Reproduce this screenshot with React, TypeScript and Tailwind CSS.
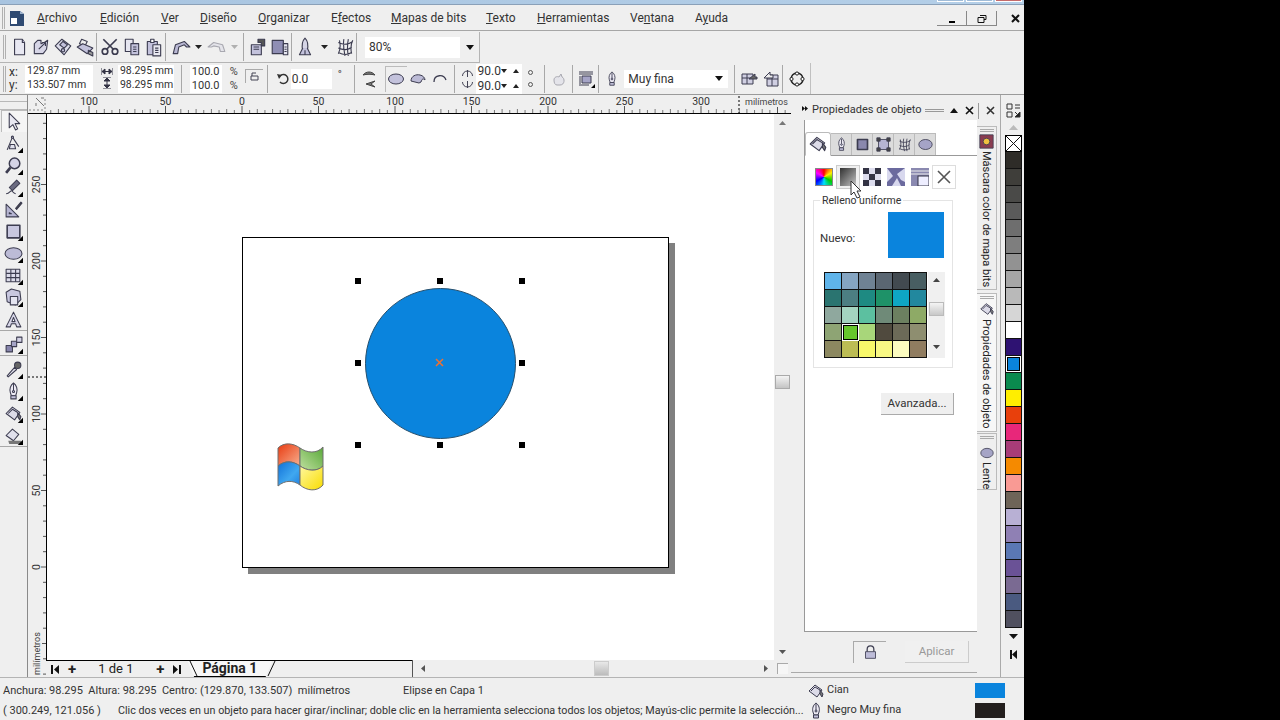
import type { ReactNode } from "react";

const FONT = "font-['Roboto','Noto_Sans',sans-serif]";
const F = "#c3c2dc";
const S = "#3c3c50";

function Ico({ size = 18, tri, dim, children }: { size?: number; tri?: boolean; dim?: boolean; children: ReactNode }) {
  return (
    <svg width={size} height={size} viewBox="0 0 18 18" fill={dim ? "#e4e4ea" : F} stroke={dim ? "#a8a8b0" : S} strokeWidth="1" strokeLinejoin="round">
      {children}
      {tri && <path d="M18 13v5h-5z" fill="#000" stroke="none" />}
    </svg>
  );
}

const icons = {
  newDoc: <><path d="M5 2h7l2 3v11H5z" fill="#e8e8f2" /><path d="M12 2v3h2" /></>,
  open: <><path d="M3 15V6l3-3h3v3l3-1 3-2-1 8-3 4H3z" fill="#d6d5e6" /><path d="M7 11l6-6M10 5h3v3" /></>,
  save: <><path d="M2 8l6-6 8 6-6 8z" fill="#dcdcea" /><path d="M6 7l3-3 4 3-3 3z" /><circle cx="9" cy="12" r="1.5" /></>,
  print: <><path d="M6 2l5 2-2 4-5-2z" fill="#eee" /><path d="M2 9l5-3 9 4-5 5z" /><path d="M12 12l4 2v3l-4-2z" fill="#999" /></>,
  cut: <><circle cx="4.5" cy="13" r="2.5" fill="none" strokeWidth="1.5" /><circle cx="13.5" cy="13" r="2.5" fill="none" strokeWidth="1.5" /><path d="M6 11l9-9M12 11L3 2" strokeWidth="1.5" /></>,
  copy: <><path d="M3 2h7v11H3z" fill="#e6e6f0" /><path d="M8 6h7v10H8z" /><path d="M10 9h3M10 11h3M10 13h3" /></>,
  paste: <><path d="M3 4h9v12H3z" /><path d="M6 2h3v3H6z" fill="#fff" /><path d="M8 7h7v10H8z" fill="#e8e8f0" /><path d="M10 10h3M10 12h3M10 14h3" /></>,
  undo: <><path d="M2 15l2-8 8-3 5 5h-3l-2-2-5 2-1 6z" fill="#b9b8d4" /></>,
  redo: <><path d="M16 13l-2-6-8-2-5 4h3l2-1 5 1 1 4z" /></>,
  imp: <><path d="M3 7h9v9H3z" /><path d="M5 9h5M5 11h5" /><path d="M9 2h6v6h-3V5H9z" fill="#555" /></>,
  exp: <><path d="M2 3h10v12H2z" fill="#8f8eb4" /><path d="M12 6h4v10h-4z" fill="#e6e6f0" /><path d="M13 9h2M13 11h2M13 13h2" /></>,
  pub: <><path d="M9 1c3 3 3 7 2 11H7C6 8 6 4 9 1z" fill="#d6d5e6" /><path d="M7 10l-3 6h10l-3-6M9 12v4" /></>,
  web: <path d="M3 15c2-4 2-8 1-12M15 15c-1-4-1-8 1-12M3 5c4 2 9 2 13-1M3 10c4 2 9 2 12-1M3 14c4 2 9 2 12 0M8 2c-1 5 0 10 1 15M12 2c-1 5-1 10 0 15" fill="none" />,
  fill: <><path d="M2 9l6-6 7 5-5 7z" fill="#dcdbe8" /><path d="M4 9l4-4 5 3" fill="none" /><path d="M13 8l3 4-1 3-2-3z" fill="#777" /></>,
  pen: <><path d="M9 1c3 2 4 6 3 9l-1 3H7l-1-3C5 7 6 3 9 1z" fill="#eceaf4" /><path d="M9 2v6" /><circle cx="9" cy="9" r="1" /><path d="M6.500 13h5v3h-5z" /></>,
  pick: <path d="M4 1v14l3.500-3 2.500 5 2-1-2.500-5H14z" fill="#e8e8f2" />,
  shape: <><path d="M3 15l5-12 6 9" fill="none" /><path d="M6 10h4l1 4H5z" fill="#e0e0ec" /><circle cx="8" cy="3" r="1" /></>,
  zoom: <><circle cx="10" cy="7" r="5" fill="#d4d3e6" strokeWidth="1.400" /><path d="M6 11l-4 5" strokeWidth="2.500" /></>,
  free: <><path d="M12 2l3 3-7 7-3-3z" fill="#6a6a80" /><path d="M2 15c3 0 4-3 5-3s1 2 4 3" fill="none" /></>,
  smart: <><path d="M2 16V4l12 12z" fill="#b6b5d2" /><path d="M5 12v1h2z" fill="#fff" /><path d="M11 8l5-6 1 1-5 6z" fill="#444" /></>,
  rect: <path d="M3 3h12v12H3z" fill="#c8c7df" strokeWidth="1.500" />,
  ell: <ellipse cx="9" cy="9" rx="8" ry="5.500" fill="#bcbbd6" />,
  table: <><path d="M2 3h13v12H2z" fill="#dcdcea" /><path d="M6.500 3v12M11 3v12M2 7h13M2 11h13" /></>,
  basic: <><path d="M2 4l5-3 8 2 1 8-5 5-8-3z" fill="#c8c7df" /><path d="M6 8h7v8H6z" fill="#e4e4f0" /></>,
  text: <><path d="M9 2l7 14h-4l-1-3H7l-1 3H2z" fill="#d8d7e8" /><path d="M9 7l-1.500 4h3z" fill="#fff" /></>,
  blend: <><path d="M2 10h6v6H2z" fill="#8785ac" /><path d="M7 6h5v5H7z" fill="#a5a4c6" /><path d="M12 2h5v5h-5z" fill="#d4d3e6" /></>,
  dropper: <><path d="M3 15l7-8 2 2-8 7z" fill="#e0e0ec" /><circle cx="13" cy="5" r="3" fill="#666" /></>,
  lock: <><path d="M5 8V5a4 4 0 018 0v3" fill="none" strokeWidth="1.500" /><path d="M3 8h12v8H3z" fill="#bdbcd8" /></>,
  inter: <><path d="M2 9l6-6 6 5-5 6z" fill="#e0e0ec" /><path d="M4 14h12l1 3H5z" fill="#777" stroke="none" /></>,
};

function Btn({ icon, dim }: { icon: keyof typeof icons; dim?: boolean }) {
  return (
    <div className="w-[22px] h-[22px] flex items-center justify-center shrink-0">
      <Ico size={20} dim={dim}>{icons[icon]}</Ico>
    </div>
  );
}

function Sep() {
  return <div className="w-[2px] h-[28px] border-l border-[#a8a8a8] shrink-0" />;
}

function Dd({ w = "w-[12px]", dim }: { w?: string; dim?: boolean }) {
  return (
    <div className={`${w} flex justify-center shrink-0`}>
      <svg width="7" height="4"><path d="M0 0h7L3.500 4z" fill={dim ? "#b0b0b0" : "#222"} /></svg>
    </div>
  );
}

function Field({ children, w, size = "text-[10.500px]" }: { children: ReactNode; w: string; size?: string }) {
  return <div className={`${w} ${size} h-[14px] bg-white flex items-center pl-[2px] leading-none text-[#333] shrink-0 whitespace-nowrap`}>{children}</div>;
}

const menu = [
  { t: "Archivo", u: 0, w: "w-[63px]" },
  { t: "Edición", u: 0, w: "w-[61px]" },
  { t: "Ver", u: 0, w: "w-[39px]" },
  { t: "Diseño", u: 0, w: "w-[58px]" },
  { t: "Organizar", u: 0, w: "w-[73px]" },
  { t: "Efectos", u: 1, w: "w-[60px]" },
  { t: "Mapas de bits", u: 0, w: "w-[95px]" },
  { t: "Texto", u: 0, w: "w-[51px]" },
  { t: "Herramientas", u: 0, w: "w-[93px]" },
  { t: "Ventana", u: 2, w: "w-[65px]" },
  { t: "Ayuda", u: 1, w: "w-[50px]" },
];

function TitleEdge() {
  return (
    <div className="h-[5px] shrink-0 bg-gradient-to-r from-[#a8c4e0] to-[#b4cfe8] border-b border-[#8aa0b8] flex justify-end pr-[2px] gap-[2px]">
      <div className="w-[27px] h-[2px] border-x border-b border-white bg-[#a0bcd8]" />
      <div className="w-[27px] h-[2px] border-x border-b border-white bg-[#a0bcd8]" />
      <div className="w-[27px] h-[2px] border-x border-b border-white bg-[#c46a6a]" />
    </div>
  );
}

function Menu() {
  return (
    <div className="h-[26px] pt-[1px] flex items-center border-b border-[#a6a6a6] shrink-0">
      <div className="w-[3px] h-[22px] ml-[2px] border-x border-[#b0b0b0]" />
      <div className="w-[32px] pl-[5px]">
        <svg width="14" height="16" viewBox="0 0 14 16">
          <path d="M0 1h10l4 3v12H0z" fill="#2f4a72" />
          <path d="M1 8h6v6H1z" fill="#fff" />
          <path d="M10 1v3h4z" fill="#9fb4d0" />
        </svg>
      </div>
      {menu.map((m) => (
        <span key={m.t} className={`${m.w} text-[12px] text-[#333] shrink-0`}>
          {m.t.slice(0, m.u)}
          <span className="underline">{m.t[m.u]}</span>
          {m.t.slice(m.u + 1)}
        </span>
      ))}
      <div className="ml-auto flex items-center text-[#222]">
        <div className="w-[30px] h-[15px] border-r border-b border-[#888] flex items-end justify-center pb-[2px]"><div className="w-[6px] h-[2px] bg-black" /></div>
        <div className="w-[30px] h-[15px] border-r border-b border-[#888] flex items-center justify-center">
          <svg width="10" height="10" fill="none" stroke="#111"><path d="M3 2.500h6v4H7M1 4.500h6v5H1zM1 4.500h6" strokeWidth="1" /></svg>
        </div>
        <div className="w-[27px] h-[15px] flex items-center justify-center pl-[10px]">
          <svg width="9" height="9" stroke="#111" strokeWidth="2"><path d="M1 1l7 7M8 1L1 8" /></svg>
        </div>
      </div>
    </div>
  );
}

function ToolbarOne() {
  return (
    <div className="h-[32px] shrink-0 flex">
      <div className="h-[31px] mt-[1px] w-[480px] border-r border-[#b4b4b4] border-b flex items-center pl-[3px]">
        <div className="w-[3px] h-[24px] border-x border-[#b0b0b0] mr-[2px]" />
        <Btn icon="newDoc" /><Btn icon="open" /><Btn icon="save" /><Btn icon="print" />
        <Sep />
        <div className="w-[1px]" />
        <Btn icon="cut" /><Btn icon="copy" /><Btn icon="paste" />
        <Sep />
        <div className="w-[3px]" />
        <Btn icon="undo" /><Dd /><div className="w-[2px]" />
        <Btn icon="redo" dim /><Dd dim /><div className="w-[3px]" />
        <Sep />
        <div className="w-[2px]" />
        <Btn icon="imp" /><Btn icon="exp" />
        <Sep />
        <div className="w-[1px]" />
        <Btn icon="pub" /><Dd w="w-[16px]" /><div className="w-[2px]" /><Btn icon="web" />
        <Sep />
        <div className="ml-[7px] w-[114px] h-[21px] bg-white flex items-center pl-[4px] text-[12px] text-[#333]">
          80%
          <div className="ml-auto w-[20px] h-full bg-[#efefef] flex items-center justify-center border-l border-white">
            <svg width="8" height="5"><path d="M0 0h8L4 5z" fill="#111" /></svg>
          </div>
        </div>
      </div>
    </div>
  );
}

function ToolbarTwo() {
  return (
    <div className="h-[32px] shrink-0 border-b border-[#9a9a9a] flex">
      <div className="w-[811px] h-[31px] border-r border-[#c0c0c0] flex items-center pl-[3px] text-[#333]">
        <div className="w-[3px] h-[26px] border-x border-[#b0b0b0] mr-[3px]" />
        <div className="w-[16px] text-[12px] leading-[13px]">x:<br />y:</div>
        <div className="flex flex-col w-[69px]"><Field w="w-[68px]">129.87 mm</Field><Field w="w-[68px]">133.507 mm</Field></div>
        <div className="w-[22px] flex flex-col items-center gap-[2px] pl-[5px]">
          <svg width="12" height="7" stroke="#334"><path d="M0 0v7M12 0v7M1 3.500h10" /><path d="M1 3.500l3-2.500v5zM11 3.500l-3-2.500v5z" fill="#334" /></svg>
          <svg width="8" height="12" stroke="#334"><path d="M0 0h8M0 12h8M4 1v10" /><path d="M4 1l-3 3h6zM4 11l-3-3h6z" fill="#334" /></svg>
        </div>
        <div className="w-[63px] ml-[2px] flex flex-col"><Field w="w-[56px]">98.295 mm</Field><Field w="w-[56px]">98.295 mm</Field></div>
        <Sep />
        <div className="w-[40px] ml-[7px] flex flex-col"><Field w="w-[32px]" size="text-[11px]">100.0</Field><Field w="w-[32px]" size="text-[11px]">100.0</Field></div>
        <div className="w-[12px] text-[11px] leading-[14px] text-[#444]">%<br />%</div>
        <div className="w-[18px] ml-[3px] h-[14px] mb-[6px] border-l border-t border-[#aaa] flex items-center justify-center">
          <svg width="10" height="10" stroke="#445" fill="none"><path d="M2 5h7v4H2zM3 5V2h4" /></svg>
        </div>
        <div className="w-[4px]" />
        <Sep />
        <div className="w-[22px] flex justify-end pr-[2px] pl-[5px]">
          <svg width="12" height="12" fill="none" stroke="#333" strokeWidth="1.500"><path d="M3 3a4.500 4.500 0 110 6" /><path d="M0 1l5 1-3 4z" fill="#333" stroke="none" /></svg>
        </div>
        <div className="h-[20px] w-[41px] bg-white flex items-center pl-[1px] text-[12px]">0.0</div>
        <div className="w-[22px] text-[11px] pl-[6px] mb-[6px] text-[#444]">°</div>
        <Sep />
        <div className="w-[26px] flex justify-center">
          <svg width="14" height="20" fill="#777" stroke="#444"><path d="M1 6c3-4 9-4 12 0-4-1-8-1-12 0zM13 12L4 15l9 3-4-3z" /></svg>
        </div>
        <div className="ml-[3px] h-[26px] w-[22px] border border-[#bbb] border-r-0 border-b-0 flex items-center justify-center"><Ico><ellipse cx="9" cy="9" rx="7.500" ry="5" /></Ico></div>
        <div className="w-[22px] flex justify-center"><Ico><path d="M2 11c0-5 5-7 9-6 3 .5 5 3 5 5-2-2-3-1-4 2l-2 1-4-1z" fill="#bcbbd6" /></Ico></div>
        <div className="w-[22px] flex justify-center"><Ico><path d="M3 12c0-8 10-8 12-2" fill="none" strokeWidth="1.300" /></Ico></div>
        <div className="w-[3px]" />
        <Sep />
        <div className="w-[21px] flex flex-col items-center gap-[2px] pl-[4px]">
          <svg width="13" height="11" fill="none" stroke="#445"><path d="M1.500 9a5 5 0 0110 0M6.500 3v7" /></svg>
          <svg width="13" height="11" fill="none" stroke="#445"><path d="M1.500 2a5 5 0 0010 0M6.500 1v7" /></svg>
        </div>
        <div className="w-[46px] flex flex-col">
          {[0, 1].map((i) => (
            <div key={i} className="h-[15px] bg-white flex items-center pl-[1px] text-[12px]">
              90.0
              <svg className="ml-auto mr-[3px]" width="18" height="4" fill="#222"><path d="M0 0h6L3 4zM12 4h6l-3-4z" /></svg>
            </div>
          ))}
        </div>
        <div className="w-[22px] pl-[6px] flex flex-col gap-[7px]">
          <div className="w-[5px] h-[5px] border border-[#555] rounded-full" />
          <div className="w-[5px] h-[5px] border border-[#555] rounded-full" />
        </div>
        <Sep />
        <div className="w-[26px] flex justify-center"><Ico dim><path d="M4 10c0-3 3-4 5-3l2-3 1 3c3 1 3 8-2 8H7c-2 0-3-2-3-5z" /></Ico></div>
        <Sep />
        <div className="w-[24px] flex justify-center"><Ico><path d="M2 2h14M2 4h14M2 15h10M2 13h2M2 11h2M2 9h2M2 7h2" /><path d="M5 6h9v7H5z" fill="#a5a4c6" /><path d="M18 14v4h-4z" fill="#000" stroke="none" /></Ico></div>
        <Sep />
        <div className="w-[24px] flex justify-center"><Ico size={16}>{icons.pen}</Ico></div>
        <div className="w-[104px] h-[18px] bg-white flex items-center pl-[4px] text-[12px]">
          Muy fina
          <svg className="ml-auto mr-[5px]" width="8" height="5"><path d="M0 0h8L4 5z" fill="#111" /></svg>
        </div>
        <div className="w-[6px]" />
        <Sep />
        <div className="w-[22px] ml-[2px] flex justify-center"><Ico><path d="M2 4h11v10H2z" fill="#d0cfe2" /><path d="M2 8h11M7 4v10" /><path d="M9 9l6-5v3h2v2h-2z" fill="#666" /></Ico></div>
        <div className="w-[22px] flex justify-center"><Ico><path d="M5 5h11v11H5z" fill="#d0cfe2" /><path d="M5 9h11M10 5v11" /><path d="M2 8l6-6v3h3v3H8z" fill="#eee" /></Ico></div>
        <Sep />
        <div className="w-[26px] flex justify-center">
          <svg width="16" height="16" fill="#fff" stroke="#222"><circle cx="8" cy="8" r="6" fill="none" strokeWidth="1.500" /><circle cx="8" cy="2.500" r="1.600" /><circle cx="8" cy="13.500" r="1.600" /><circle cx="2.500" cy="8" r="1.600" /><circle cx="13.500" cy="8" r="1.600" /></svg>
        </div>
      </div>
    </div>
  );
}

const tools: (keyof typeof icons | "sep")[] = ["pick", "shape", "zoom", "free", "smart", "rect", "ell", "table", "basic", "text", "sep", "blend", "sep", "dropper", "pen", "fill", "inter"];

function Toolbox() {
  return (
    <div className="w-[28px] shrink-0 border-r border-[#8a8a8a] flex flex-col">
      <div className="h-[9px] mt-[6px] border-y border-[#b8b8b8] shrink-0" />
      {tools.map((t, i) =>
        t === "sep" ? (
          <div key={i} className="h-[3px] border-t border-[#a8a8a8] shrink-0" />
        ) : (
          <div key={i} className={`h-[22px] flex items-center justify-center shrink-0 ${i === 0 ? "border-l border-t border-[#bbb] ml-[1px] bg-[#f5f5f5]" : ""}`}>
            <Ico size={19} tri={i !== 0 && t !== "text" && t !== "smart"}>{icons[t as keyof typeof icons]}</Ico>
          </div>
        )
      )}
      <div className="border-t border-[#a8a8a8]" />
    </div>
  );
}

function HRuler() {
  const ticks = [];
  for (let mm = -125; mm <= 355; mm += 5) {
    const x = 214 + mm * 1.53;
    const big = mm % 50 === 0;
    const mid = mm % 10 === 0;
    ticks.push(<path key={mm} d={`M${x} ${big ? 11 : mid ? 14 : 15}V18`} stroke={big ? "#555" : "#777"} />);
  }
  return (
    <div className="h-[19px] shrink-0 flex border-b border-black">
      <svg width="763" height="18" className="block" viewBox="0 0 763 18">
        <path d="M8 3l8 8M16 3l-3 0M8 11l0-3" stroke="#777" fill="none" />
        <path d="M1 15h16M17 18V2" stroke="#888" strokeDasharray="2 2" fill="none" />
        {ticks}
        {[-100, -50, 0, 50, 100, 150, 200, 250, 300].map((mm) => (
          <text key={mm} x={214 + mm * 1.53} y="10" textAnchor="middle" fontSize="10.500" fill="#333" stroke="none" fontFamily="Roboto">{Math.abs(mm)}</text>
        ))}
        <path d="M711 1V18" stroke="#000" strokeDasharray="2 2" />
        <rect x="716" y="1" width="46" height="11" fill="#efefef" />
        <text x="717" y="10" fontSize="9" fill="#444" fontFamily="Roboto">milímetros</text>
      </svg>
    </div>
  );
}

function VRuler() {
  const ticks = [];
  for (let mm = -70; mm <= 290; mm += 10) {
    const y = 453 - mm * 1.53;
    ticks.push(<path key={mm} d={`M${mm % 50 === 0 ? 13 : 15} ${y}H18`} stroke="#555" />);
  }
  return (
    <svg width="18" height="563" className="block shrink-0" viewBox="0 0 18 563">
      {ticks}
      {[0, 50, 100, 150, 200, 250].map((mm) => (
        <text key={mm} transform={`translate(12 ${453 - mm * 1.53}) rotate(-90)`} textAnchor="middle" fontSize="10.500" fill="#333" fontFamily="Roboto">{mm}</text>
      ))}
      <path d="M0 263H18" stroke="#000" strokeDasharray="2 2" />
      <rect x="2" y="515" width="12" height="46" fill="#efefef" />
      <text transform="translate(12 561) rotate(-90)" fontSize="9" fill="#444" fontFamily="Roboto">milímetros</text>
    </svg>
  );
}

function WinLogo() {
  return (
    <svg width="48" height="50" viewBox="0 0 48 50" stroke="#6e6e6e" strokeWidth="1">
      <defs>
        <linearGradient id="r" x1="0" y1="0" x2="1" y2="1"><stop offset="0" stopColor="#e83a10" /><stop offset="1" stopColor="#f8b090" /></linearGradient>
        <linearGradient id="g" x1="0" y1="1" x2="1" y2="0"><stop offset="0" stopColor="#c0e0a0" /><stop offset="1" stopColor="#58a838" /></linearGradient>
        <linearGradient id="b" x1="0" y1="0" x2="1" y2="1"><stop offset="0" stopColor="#1070d8" /><stop offset="0.600" stopColor="#40a8f0" /><stop offset="1" stopColor="#2080e0" /></linearGradient>
        <linearGradient id="y" x1="0" y1="0" x2="1" y2="1"><stop offset="0" stopColor="#fff8a0" /><stop offset="1" stopColor="#f8dc00" /></linearGradient>
      </defs>
      <path d="M1 6C7 0 16 1 23 6V24C16 19 8 18 1 24Z" fill="url(#r)" />
      <path d="M23 6C30 11 40 12 46 5V24C40 30 30 29 23 24Z" fill="url(#g)" />
      <path d="M1 24C8 18 16 19 23 24V43C16 38 8 38 1 44Z" fill="url(#b)" />
      <path d="M23 24C30 29 40 30 46 24V43C40 50 30 49 23 43Z" fill="url(#y)" />
    </svg>
  );
}

function Handle({ cls }: { cls: string }) {
  return <div className={`absolute w-[6px] h-[6px] bg-black ${cls}`} />;
}

function Canvas() {
  return (
    <div className="flex-1 relative bg-white border-l border-black overflow-hidden">
      <div className="absolute left-[201px] top-[129px] w-[427px] h-[331px] bg-[#808080]" />
      <div className="absolute left-[195px] top-[123px] w-[427px] h-[331px] bg-white border border-black" />
      <div className="absolute left-[318px] top-[174px] w-[151px] h-[151px] rounded-full bg-[#0a84dd] border border-[#26506e]" />
      <svg className="absolute left-[388px] top-[244px]" width="9" height="9" stroke="#f07030" strokeWidth="1.500"><path d="M1 1l7 7M8 1L1 8" /></svg>
      <Handle cls="left-[308px] top-[164px]" />
      <Handle cls="left-[390px] top-[164px]" />
      <Handle cls="left-[472px] top-[164px]" />
      <Handle cls="left-[308px] top-[246px]" />
      <Handle cls="left-[472px] top-[246px]" />
      <Handle cls="left-[308px] top-[328px]" />
      <Handle cls="left-[390px] top-[328px]" />
      <Handle cls="left-[472px] top-[328px]" />
      <div className="absolute left-[230px] top-[328px]"><WinLogo /></div>
    </div>
  );
}

function VScroll() {
  return (
    <div className="w-[17px] shrink-0 bg-[#efefef] flex flex-col items-center">
      <svg className="mt-[7px]" width="7" height="4"><path d="M0 4h7L3.500 0z" fill="#777" /></svg>
      <div className="mt-[250px] w-[15px] h-[14px] bg-gradient-to-b from-[#f4f4f4] to-[#c4c4c4] border border-[#aaa]" />
      <svg className="mt-auto mb-[6px]" width="7" height="4"><path d="M0 0h7L3.500 4z" fill="#555" /></svg>
    </div>
  );
}

function PageBar() {
  return (
    <div className="h-[17px] shrink-0 flex bg-[#efefef]">
      <div className="w-[366px] h-full border-t border-black relative flex items-center text-[#222] text-[13px]">
        <svg className="ml-[5px]" width="8" height="9" fill="#111"><path d="M0 0h2v9H0zM8 0v9L3 4.500z" /></svg>
        <span className="ml-[9px] font-bold text-[15px] leading-none">+</span>
        <span className="ml-[22px] w-[58px]">1 de 1</span>
        <span className="font-bold text-[15px] leading-none">+</span>
        <svg className="ml-[9px]" width="8" height="9" fill="#111"><path d="M8 0H6v9h2zM0 0v9l5-4.500z" /></svg>
        <div className="ml-[6px] w-[85px] h-[16px] bg-[#f7f7f7] border-b border-black text-center font-bold text-[14px] leading-[14px] [clip-path:polygon(0_0,100%_0,92%_100%,8%_100%)]">Página 1</div>
        <svg className="absolute left-[143px] top-0" width="88" height="17" fill="none" stroke="#111"><path d="M1 0l7 15M86 0l-7 15" /></svg>
      </div>
      <div className="w-[1px] h-[17px] bg-[#555]" />
      <div className="w-[361px] flex items-center relative">
        <svg className="ml-[8px]" width="4" height="7"><path d="M4 0v7L0 3.500z" fill="#555" /></svg>
        <div className="ml-[169px] w-[15px] h-[15px] bg-gradient-to-b from-[#e8e8e8] to-[#bcbcbc] border border-[#ccc]" />
        <svg className="ml-auto mr-[6px]" width="4" height="7"><path d="M0 0v7l4-3.500z" fill="#555" /></svg>
      </div>
      <div className="w-[17px] flex items-center justify-center"><div className="w-[11px] h-[11px] border-l border-t border-[#aaa] bg-[#f6f6f6]" /></div>
    </div>
  );
}

const grid = [
  ["#5fb4ea", "#85a5c2", "#6f8294", "#5a6672", "#424a50", "#485e62"],
  ["#2a7470", "#4c7e82", "#1e8a82", "#1e9268", "#0ea6c4", "#22889e"],
  ["#8fa89e", "#a4d4c0", "#5cc0a0", "#6f8a78", "#6c8060", "#8eaa66"],
  ["#8ea474", "#66c62c", "#a8d67a", "#504a3e", "#6c6a58", "#8e8e70"],
  ["#8c8860", "#bcbc54", "#f8f86a", "#f8f884", "#fcfcc0", "#907c60"],
];

function Docker() {
  return (
    <div className="w-[186px] shrink-0 flex flex-col">
      <div className="h-[25px] shrink-0 flex items-center pl-[11px] pt-[6px] text-[#333] text-[11px] whitespace-nowrap">
        <svg className="mr-[4px] mb-[4px]" width="6" height="5" fill="#111"><path d="M0 0l3 2.500L0 5zM3 0l3 2.500L3 5z" /></svg>
        Propiedades de objeto
        <div className="ml-[3px] w-[19px] h-[3px] border-y border-[#999]" />
        <svg className="ml-[6px]" width="8" height="5"><path d="M0 5h8L4 0z" fill="#111" /></svg>
        <svg className="ml-[7px]" width="9" height="9" stroke="#111" strokeWidth="1.600"><path d="M1 1l7 7M8 1L1 8" /></svg>
      </div>
      <div className="flex-1 ml-[13px] bg-white border-l border-b border-[#999] flex flex-col">
        <div className="h-[36px] flex items-end border-b border-[#999]">
          <div className="w-[26px] h-[24px] bg-white border border-[#bbb] border-b-white flex items-center justify-center -mb-[1px] rounded-t-[3px]"><Ico size={20}>{icons.fill}</Ico></div>
          {(["pen", "rect", "basic", "web", "ell"] as const).map((k, i) => (
            <div key={k} className="w-[21px] h-[22px] bg-[#dcdcdc] border-r border-t border-[#bbb] flex items-center justify-center">
              <Ico size={15}>{i === 1 ? <path d="M3 3h12v12H3z" fill="#8987ad" strokeWidth="2" /> : i === 2 ? <><path d="M3 3h12v12H3z" fill="#b5b4d2" /><path d="M1 1h4v4H1zM13 1h4v4h-4zM1 13h4v4H1zM13 13h4v4h-4z" fill="#444" /></> : i === 4 ? <ellipse cx="9" cy="9" rx="8" ry="6" fill="#a5a4c6" /> : icons[k]}</Ico>
            </div>
          ))}
        </div>
        <div className="flex pl-[7px] mt-[9px] h-[24px] items-center">
          <div className="w-[24px] flex justify-center">
            <div className="w-[18px] h-[18px] [background:conic-gradient(#ff0000,#ffee00,#00cc00,#00e0ff,#0000ff,#ff00ff,#ff0000)] border border-[#888]" />
          </div>
          <div className="w-[24px] h-[24px] bg-[#f0f0f0] border border-[#ccc] flex items-center justify-center">
            <div className="w-[16px] h-[18px] bg-gradient-to-br from-[#333] to-[#c8c8c8]" />
          </div>
          <div className="w-[24px] flex justify-center">
            <svg width="18" height="18"><rect width="18" height="18" fill="#dde" /><path d="M0 0h6v6H0zM12 0h6v6h-6zM6 6h6v6H6zM0 12h6v6H0zM12 12h6v6h-6z" fill="#334" /></svg>
          </div>
          <div className="w-[24px] flex justify-center">
            <svg width="18" height="18"><rect width="18" height="18" fill="#6b6a9e" /><path d="M0 0l6 8-6 6zM18 0l-8 6 4 6 4 2zM5 18l5-8 4 8z" fill="#d8d8ee" /></svg>
          </div>
          <div className="w-[24px] flex justify-center">
            <svg width="18" height="18"><rect width="18" height="18" fill="#8a89b0" /><path d="M0 3h18M0 6h18" stroke="#eee" /><rect x="7" y="8" width="11" height="10" fill="#eef" stroke="#334" /></svg>
          </div>
          <div className="w-[24px] h-[24px] border border-[#ddd] flex items-center justify-center">
            <svg width="14" height="14" stroke="#555" strokeWidth="1.600"><path d="M1 1l12 12M13 1L1 13" /></svg>
          </div>
        </div>
        <div className="relative ml-[8px] mt-[11px] w-[140px] h-[168px] border border-[#e4e4e4] flex flex-col">
          <span className="absolute -top-[7px] left-[6px] bg-white px-[2px] text-[10.500px] leading-[14px] text-[#333]">Relleno uniforme</span>
          <div className="flex items-center h-[46px] mt-[11px] pl-[6px] text-[11.500px] text-[#333]">
            <span className="pt-[8px]">Nuevo:</span>
            <div className="ml-auto mr-[8px] w-[56px] h-[46px] bg-[#0a84dd]" />
          </div>
          <div className="flex ml-[10px] mt-[14px]">
            <div className="grid grid-cols-[repeat(6,17px)] grid-rows-[repeat(5,17px)] border-l border-t border-[#111] bg-black">
              {grid.flat().map((c, i) => (
                <div key={i} className={i === 19 ? "border border-white flex" : "border-r border-b border-[#111]"} style={{ backgroundColor: c }}>
                  {i === 19 && <div className="flex-1 border border-black" style={{ backgroundColor: c }} />}
                </div>
              ))}
            </div>
            <div className="ml-[1px] w-[17px] bg-[#f0f0f0] flex flex-col items-center">
              <svg className="mt-[6px]" width="7" height="4"><path d="M0 4h7L3.500 0z" fill="#444" /></svg>
              <div className="mt-[20px] w-[15px] h-[14px] bg-gradient-to-b from-[#f4f4f4] to-[#c8c8c8] border border-[#bbb]" />
              <svg className="mt-[29px]" width="7" height="4"><path d="M0 0h7L3.500 4z" fill="#444" /></svg>
            </div>
          </div>
        </div>
        <button className="ml-[76px] mt-[25px] w-[73px] h-[22px] bg-[#efefef] border-r border-b border-[#aaa] text-[11.500px] text-[#333]">Avanzada...</button>
      </div>
      <div className="h-[40px] shrink-0 flex items-center pl-[62px] gap-[19px]">
        <div className="w-[33px] h-[22px] border-l border-t border-[#aaa] flex items-center justify-center"><Ico size={15}>{icons.lock}</Ico></div>
        <div className="w-[64px] h-[22px] border-r border-b border-[#ccc] bg-[#f0f0f0] flex items-center justify-center text-[11.500px] text-[#999]">Aplicar</div>
      </div>
      <div className="h-[5px] shrink-0 border-t border-[#aaa]" />
    </div>
  );
}

function SideTab({ label, top, h, active, icon }: { label: string; top: string; h: string; active?: boolean; icon: ReactNode }) {
  return (
    <div className={`${top} ${h} w-[20px] shrink-0 flex flex-col items-center border border-[#bbb] border-l-0 ${active ? "bg-[#f7f7f7]" : "bg-[#efefef]"}`}>
      <div className="mt-[2px] w-[14px] h-[3px] border-y border-[#aaa]" />
      <div className="my-[2px]">{icon}</div>
      <span className="[writing-mode:vertical-rl] text-[11px] leading-none text-[#222] whitespace-nowrap">{label}</span>
    </div>
  );
}

function SideTabs() {
  return (
    <div className="w-[24px] shrink-0 flex flex-col border-r border-[#aaa]">
      <div className="h-[31px] shrink-0 flex items-center">
        <div className="w-[1px] h-[16px] bg-[#999] ml-[1px]" />
        <svg className="ml-[7px]" width="9" height="9" stroke="#333" strokeWidth="1.600"><path d="M1 1l7 7M8 1L1 8" /></svg>
      </div>
      <SideTab label="Máscara color de mapa bits" top="mt-0" h="h-[164px]" icon={<Ico size={15}><path d="M1 1h16v16H1z" fill="#8a3c50" /><circle cx="9" cy="9" r="4" fill="#f0c040" /></Ico>} />
      <SideTab label="Propiedades de objeto" top="mt-[3px]" h="h-[139px]" active icon={<Ico size={16}>{icons.fill}</Ico>} />
      <SideTab label="Lente" top="mt-[1px]" h="h-[57px]" icon={<div className="pt-[5px]"><Ico size={14}><ellipse cx="9" cy="9" rx="8" ry="6" fill="#a5a4c6" /></Ico></div>} />
    </div>
  );
}

const palette = ["#2e2c28", "#3f3e3a", "#4a4a48", "#5a5a5a", "#6e6e6e", "#7e7e7e", "#929292", "#a6a6a6", "#b9b9b9", "#d6d6d6", "#ffffff", "#2e1272", "#0a84dd", "#0a8a4e", "#ffee00", "#e8400c", "#e8277a", "#a83c78", "#f58a00", "#f99a94", "#6e6458", "#b8b0d4", "#8f80b4", "#5a78b4", "#6a5296", "#7a6a92", "#4a5a80", "#50505f"];

function Palette() {
  return (
    <div className="w-[23px] shrink-0 pl-[4px] flex flex-col">
      <div className="h-[20px] mt-[5px] flex items-center pl-[1px]">
        <svg width="15" height="15" fill="none" stroke="#333"><path d="M1 1h5v5H1zM1 9h5v5H1zM9 2h5M9 5h5M9 9l5 5" /><path d="M9 14h5V9z" fill="#222" /></svg>
      </div>
      <div className="h-[15px] flex items-center justify-center pr-[2px]">
        <svg width="9" height="5"><path d="M0 5h9L4.500 0z" fill="#bbb" /></svg>
      </div>
      <div className="w-[17px] h-[17px] border border-black bg-white">
        <svg width="15" height="15" stroke="#111"><path d="M0 0l15 15M15 0L0 15" /></svg>
      </div>
      {palette.map((c, i) => (
        <div key={i} className={`w-[17px] h-[17px] border-b border-x border-[#111] ${i === 12 ? "bg-white flex" : ""}`} style={i === 12 ? undefined : { backgroundColor: c }}>
          {i === 12 && <div className="m-[1px] flex-1 border border-black" style={{ backgroundColor: c }} />}
        </div>
      ))}
      <div className="mt-[6px] flex justify-center pr-[2px]"><svg width="9" height="5"><path d="M0 0h9L4.500 5z" fill="#111" /></svg></div>
      <div className="mt-[11px] flex justify-center pr-[2px]"><svg width="7" height="9" fill="#111"><path d="M0 0h2v9H0zM7 0v9L2 4.500z" /></svg></div>
    </div>
  );
}

function StatusBar() {
  return (
    <div className="h-[43px] shrink-0 border-t border-[#b4b4b4] flex text-[#333] text-[11px]">
      <div className="w-[806px] flex flex-col pl-[3px]">
        <div className="h-[24px] flex items-center pt-[3px] whitespace-nowrap">
          <span className="w-[400px] shrink-0">Anchura: 98.295&nbsp; Altura: 98.295&nbsp; Centro: (129.870, 133.507)&nbsp; milímetros</span>
          <span>Elipse en Capa 1</span>
        </div>
        <div className="h-[18px] flex items-center whitespace-nowrap">
          <span className="w-[115px] shrink-0">( 300.249, 121.056 )</span>
          <span className="text-[10.750px]">Clic dos veces en un objeto para hacer girar/inclinar; doble clic en la herramienta selecciona todos los objetos; Mayús-clic permite la selección...</span>
        </div>
      </div>
      <div className="flex-1 flex flex-col pl-[1px]">
        <div className="h-[23px] flex items-center pt-[2px]">
          <Ico size={18}>{icons.fill}</Ico>
          <span className="ml-[2px]">Cian</span>
          <div className="ml-auto mr-[19px] w-[30px] h-[15px] bg-[#0a84dd]" />
        </div>
        <div className="h-[19px] flex items-center">
          <Ico size={18}>{icons.pen}</Ico>
          <span className="ml-[2px]">Negro Muy fina</span>
          <div className="ml-auto mr-[19px] w-[30px] h-[15px] bg-[#231f1e]" />
        </div>
      </div>
    </div>
  );
}

export default function App() {
  return (
    <div className={`relative w-[1280px] h-[720px] bg-black overflow-hidden ${FONT}`}>
      <div className="w-[1024px] h-[720px] bg-[#efefef] flex flex-col">
        <TitleEdge />
        <Menu />
        <ToolbarOne />
        <ToolbarTwo />
        <div className="flex-1 flex min-h-0">
          <Toolbox />
          <div className="w-[763px] shrink-0 flex flex-col">
            <HRuler />
            <div className="flex-1 flex min-h-0">
              <VRuler />
              <div className="flex-1 flex flex-col min-w-0">
                <div className="flex-1 flex min-h-0">
                  <Canvas />
                  <VScroll />
                </div>
                <PageBar />
              </div>
            </div>
          </div>
          <Docker />
          <SideTabs />
          <Palette />
        </div>
        <StatusBar />
      </div>
      <svg className="absolute left-[850px] top-[180px]" width="14" height="20" fill="#fff" stroke="#333"><path d="M1 1v14l3-3 3 6 3-1-3-6h4z" /></svg>
    </div>
  );
}
